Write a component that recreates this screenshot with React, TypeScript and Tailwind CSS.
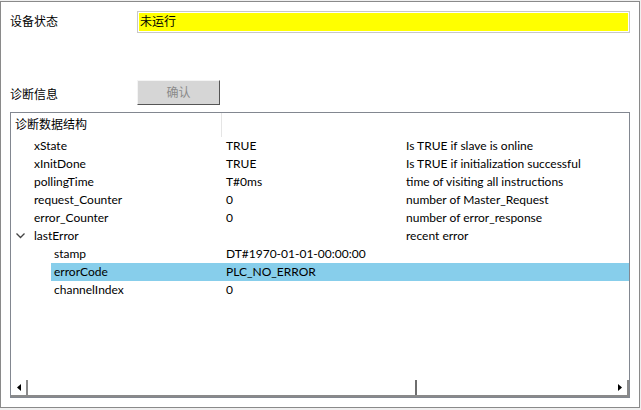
import { ReactNode } from 'react';

type Row = {
  name: string;
  value?: string;
  desc?: string;
  level: 1 | 2;
  expander?: boolean;
  selected?: boolean;
};

const rows: Row[] = [
  { name: 'xState', value: 'TRUE', desc: 'Is TRUE if slave is online', level: 1 },
  { name: 'xInitDone', value: 'TRUE', desc: 'Is TRUE if initialization successful', level: 1 },
  { name: 'pollingTime', value: 'T#0ms', desc: 'time of visiting all instructions', level: 1 },
  { name: 'request_Counter', value: '0', desc: 'number of Master_Request', level: 1 },
  { name: 'error_Counter', value: '0', desc: 'number of error_response', level: 1 },
  { name: 'lastError', desc: 'recent error', level: 1, expander: true },
  { name: 'stamp', value: 'DT#1970-01-01-00:00:00', level: 2 },
  { name: 'errorCode', value: 'PLC_NO_ERROR', level: 2, selected: true },
  { name: 'channelIndex', value: '0', level: 2 },
];

function Label({ children }: { children: ReactNode }) {
  return <span className="w-[127px] shrink-0 text-[12px] leading-none text-black">{children}</span>;
}

function TreeRow({ row }: { row: Row }) {
  return (
    <div className="flex h-[18px] items-center text-[12px] text-black">
      <div className={`flex h-full items-center ${row.level === 1 ? 'w-[211px] pl-[4px]' : 'w-[211px] pl-[40px]'}`}>
        {row.level === 1 && (
          <span className="flex w-[19px] items-center">
            {row.expander && (
              <svg width="9" height="6" viewBox="0 0 9 6" className="ml-[1px]">
                <polyline points="0.5,0.5 4.5,4.5 8.5,0.5" fill="none" stroke="#444" strokeWidth="1.3" />
              </svg>
            )}
          </span>
        )}
        <span
          className={`flex h-full flex-1 items-center ${row.selected ? 'bg-[#87ceeb] pl-[3px]' : row.level === 2 ? 'pl-[3px]' : ''}`}
        >
          {row.name}
        </span>
      </div>
      <div className={`flex h-full flex-1 items-center ${row.selected ? 'bg-[#87ceeb]' : ''}`}>
        <span className="w-[184px] shrink-0 pl-[4px]">{row.value}</span>
        <span className="whitespace-nowrap">{row.desc}</span>
      </div>
    </div>
  );
}

function ScrollBar() {
  return (
    <div className="flex h-[17px] items-stretch border-b-2 border-[#8a8a8a] bg-white">
      <div className="flex w-[17px] items-center justify-center border-r-2 border-[#8a8a8a] bg-white">
        <svg width="4" height="7" viewBox="0 0 4 7">
          <polygon points="4,0 0,3.5 4,7" fill="#000" />
        </svg>
      </div>
      <div className="w-[389px] border-r-2 border-[#6e6e6e] bg-white" />
      <div className="flex-1" />
      <div className="flex w-[17px] items-center justify-center border-r-2 border-[#8a8a8a] bg-white">
        <svg width="4" height="7" viewBox="0 0 4 7">
          <polygon points="0,0 4,3.5 0,7" fill="#000" />
        </svg>
      </div>
    </div>
  );
}

export default function App() {
  return (
    <div
      className="h-[410px] w-[641px] bg-[#f0f0f0] pt-px"
      style={{ fontFamily: 'Lato, "Noto Sans CJK SC", sans-serif' }}
    >
      <div className="flex h-[407px] w-[640px] flex-col border border-[#8a8a8a] bg-white pl-[9px] pr-[9px] pt-[9px]">
        <div className="flex items-center">
          <Label>设备状态</Label>
          <div className="flex h-[22px] flex-1 items-center border border-[#c8c8c8] bg-[#ffff00] pl-[2px] text-[12px] text-black shadow-[inset_0_0_0_1px_#ffffff]">
            未运行
          </div>
        </div>

        <div className="mt-[47px] flex items-center">
          <Label>
            <span className="relative top-[2px]">诊断信息</span>
          </Label>
          <button className="flex h-[25px] w-[83px] items-center justify-center border border-b-[#555] border-l-[#f4f4f4] border-r-[#555] border-t-[#f4f4f4] bg-[#d6d6d6] text-[12px] text-[#8a8a8a]">
            确认
          </button>
        </div>

        <div className="mt-[7px] flex h-[286px] flex-col border border-[#828790] bg-white">
          <div className="flex h-[24px] text-[12px] text-black">
            <div className="flex w-[211px] items-center border-r border-[#e5e5e5] pl-[4px]">诊断数据结构</div>
            <div className="flex-1" />
          </div>
          <div className="flex flex-col">
            {rows.map((row) => (
              <TreeRow key={row.name} row={row} />
            ))}
          </div>
          <div className="flex-1" />
          <ScrollBar />
        </div>
      </div>
    </div>
  );
}
